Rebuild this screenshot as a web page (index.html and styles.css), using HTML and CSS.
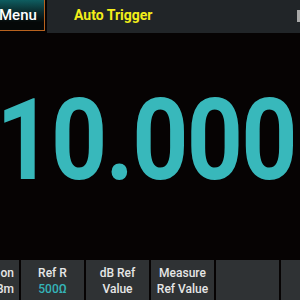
FILE: index.html
```html
<!DOCTYPE html>
<html lang="en">
  <head>
    <meta charset="utf-8" />
    <link rel="stylesheet" href="styles.css">
  </head>
  <body>
    <div class="screen">
      <!-- top bar -->
      <div class="top-bar">
        <div class="menu-btn">Menu</div>
        <div class="status-bar">
          <span class="trigger">Auto Trigger</span>
          <span class="edge-tab"></span>
        </div>
      </div>

      <!-- main reading -->
      <div class="reading">
        <span class="value">10.000</span>
      </div>

      <!-- soft keys -->
      <div class="softkeys">
        <div class="key key-cut"><span>on</span><span class="sub">Bm</span></div>
        <div class="key"><span>Ref R</span><span class="sub">500Ω</span></div>
        <div class="key"><span>dB Ref</span><span>Value</span></div>
        <div class="key"><span>Measure</span><span>Ref Value</span></div>
        <div class="key"></div>
        <div class="key"></div>
      </div>
    </div>
  </body>
</html>
```

FILE: styles.css
```css
html,
body {
  margin: 0;
  padding: 0;
  background-color: #060303;
}

.screen {
  width: 300px;
  height: 300px;
  display: flex;
  flex-direction: column;
  overflow: hidden;
  font-family: Roboto, "Liberation Sans", sans-serif;
}

/* 상단 바 */
.top-bar {
  height: 33px;
  display: flex;
  gap: 2px;
}

.menu-btn {
  width: 45px;
  height: 31px;
  box-sizing: border-box;
  border-right: 1px solid #b8621e;
  border-bottom: 1px solid #b8621e;
  background: linear-gradient(#0e5d60 0%, #0b2a2c 40%, #050808 75%);
  color: #ffffff;
  font-size: 15px;
  font-weight: 500;
  line-height: 31px;
  white-space: nowrap;
  text-indent: -1px;
}

.status-bar {
  flex: 1;
  height: 33px;
  background-color: #212528;
  display: flex;
  align-items: center;
  justify-content: space-between;
}

.trigger {
  margin-left: 27px;
  color: #f3ee1a;
  font-size: 14px;
  font-weight: 700;
  margin-top: -3px;
}

.edge-tab {
  width: 3px;
  height: 12px;
  background-color: #a8a8a8;
  margin-top: -2px;
}

/* 측정값 */
.reading {
  flex: 1;
  display: flex;
  align-items: center;
  justify-content: center;
}

.value {
  color: #38b8bb;
  font-size: 114px;
  font-weight: 700;
  letter-spacing: -2px;
  white-space: nowrap;
  transform: scaleX(0.86);
  margin-top: -14px;
  margin-left: -8px;
}

/* 소프트키 */
.softkeys {
  height: 40px;
  display: flex;
  gap: 2px;
  margin-left: -44px;
}

.key {
  width: 63px;
  flex: none;
  background-color: #2f3234;
  display: flex;
  flex-direction: column;
  align-items: center;
  justify-content: center;
  gap: 2px;
  color: #e6e6e6;
  font-size: 12px;
  font-weight: 500;
  line-height: 14px;
  padding-top: 2px;
  box-sizing: border-box;
}

.key-cut {
  align-items: flex-end;
  padding-right: 5px;
}

.sub {
  color: #35b4b8;
}

.key-cut .sub {
  color: #e6e6e6;
}
```
